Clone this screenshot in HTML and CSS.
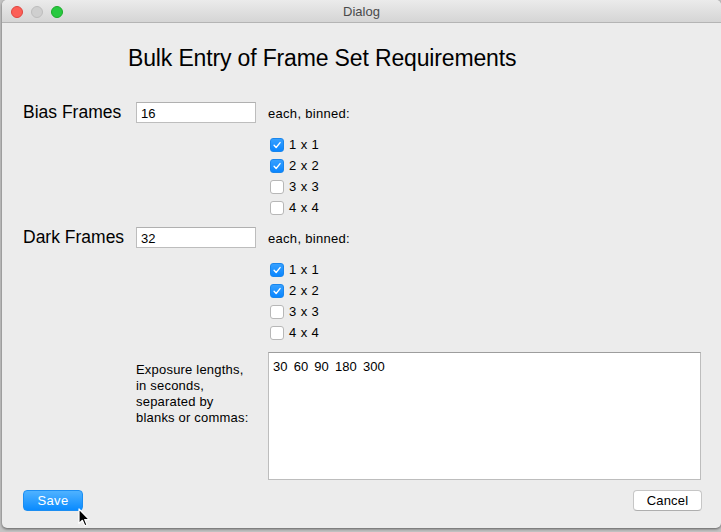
FILE: index.html
```html
<!DOCTYPE html>
<html>
<head>
<meta charset="utf-8">
<link rel="stylesheet" href="styles.css">
</head>
<body>
<div class="window">
  <div class="titlebar">
    <div class="lights">
      <span class="light red"></span>
      <span class="light gray"></span>
      <span class="light green"></span>
    </div>
    <div class="wintitle">Dialog</div>
  </div>
  <div class="content">
    <h1 class="heading">Bulk Entry of Frame Set Requirements</h1>

    <div class="frames">
      <div class="frame-label">Bias Frames</div>
      <input class="count" type="text" value="16">
      <div class="each">each, binned:</div>
      <div class="checks">
        <div class="check"><span class="box on"><svg viewBox="0 0 14 14"><path d="M3.6 7.4 L6 9.9 L10.6 4.2"/></svg></span>1 x 1</div>
        <div class="check"><span class="box on"><svg viewBox="0 0 14 14"><path d="M3.6 7.4 L6 9.9 L10.6 4.2"/></svg></span>2 x 2</div>
        <div class="check"><span class="box"></span>3 x 3</div>
        <div class="check"><span class="box"></span>4 x 4</div>
      </div>
    </div>

    <div class="frames">
      <div class="frame-label">Dark Frames</div>
      <input class="count" type="text" value="32">
      <div class="each">each, binned:</div>
      <div class="checks">
        <div class="check"><span class="box on"><svg viewBox="0 0 14 14"><path d="M3.6 7.4 L6 9.9 L10.6 4.2"/></svg></span>1 x 1</div>
        <div class="check"><span class="box on"><svg viewBox="0 0 14 14"><path d="M3.6 7.4 L6 9.9 L10.6 4.2"/></svg></span>2 x 2</div>
        <div class="check"><span class="box"></span>3 x 3</div>
        <div class="check"><span class="box"></span>4 x 4</div>
      </div>
    </div>

    <div class="exposure">
      <div class="exp-label">Exposure lengths,<br>in seconds,<br>separated by<br>blanks or commas:</div>
      <textarea class="exp-text">30 60 90 180 300</textarea>
    </div>

    <div class="buttons">
      <button class="btn save">Save</button>
      <button class="btn cancel">Cancel</button>
    </div>
  </div>
</div>
<svg class="cursor" width="14" height="20" viewBox="0 0 14 20"><path d="M1 1 L1 15.5 L4.4 12.3 L6.8 17.8 L9 16.9 L6.7 11.6 L11.2 11.6 Z" fill="#000" stroke="#fff" stroke-width="1.2" stroke-linejoin="round"/></svg>
</body>
</html>
```

FILE: styles.css
```css
html, body {
  margin: 0;
  padding: 0;
}
body {
  width: 721px;
  height: 532px;
  overflow: hidden;
  background: #c4c4c4;
  font-family: "Liberation Sans", Arial, Helvetica, sans-serif;
  color: #000;
  position: relative;
}
.window {
  margin-left: 2px;
  width: 719px;
  height: 528px;
  background: #ececec;
  border-radius: 5px;
  box-shadow: 0 1px 3px rgba(0,0,0,0.55);
  overflow: hidden;
}
.titlebar {
  height: 22px;
  border-bottom: 1px solid #b4b4b4;
  background: linear-gradient(#ebebeb, #d5d5d5);
  position: relative;
  display: flex;
  align-items: center;
}
.lights {
  display: flex;
  gap: 8px;
  padding-left: 9px;
  padding-top: 2px;
}
.light {
  width: 12px;
  height: 12px;
  border-radius: 50%;
  box-sizing: border-box;
}
.red { background: #fc5f57; border: 0.5px solid #e0443e; }
.gray { background: #cfcfcf; border: 0.5px solid #bdbdbd; }
.green { background: #28c940; border: 0.5px solid #1aab29; }
.wintitle {
  position: absolute;
  left: 0;
  right: 0;
  top: 0;
  line-height: 24px;
  text-align: center;
  font-size: 13px;
  color: #4a4a4a;
}
.content {
  padding-left: 21px;
  padding-right: 20px;
}
.heading {
  margin: 20px 0 29px 105px;
  font-size: 23px;
  line-height: 30px;
  font-weight: normal;
  letter-spacing: -0.15px;
  color: #000;
}
.frames {
  display: grid;
  grid-template-columns: 113px 132px 1fr;
  grid-template-rows: 21px auto;
  row-gap: 11px;
  margin-bottom: 9px;
}
.frame-label {
  font-size: 17.5px;
  line-height: 21px;
  color: #000;
}
.count {
  box-sizing: border-box;
  width: 120px;
  height: 21px;
  margin: 0;
  padding: 1px 4px 0;
  border: 1px solid #bdbdbd;
  border-top-color: #b0b0b0;
  background: #fff;
  font-family: "Liberation Sans", Arial, sans-serif;
  font-size: 13px;
  color: #000;
  outline: none;
}
.each {
  font-size: 13px;
  line-height: 21px;
  padding-top: 1px;
  letter-spacing: 0.3px;
  color: #000;
}
.checks {
  grid-column: 3;
  grid-row: 2;
  padding-left: 2px;
}
.check {
  display: flex;
  align-items: center;
  height: 21px;
  gap: 5px;
  font-size: 13px;
  letter-spacing: 0.4px;
  color: #000;
}
.box {
  width: 14px;
  height: 14px;
  box-sizing: border-box;
  border-radius: 3px;
  background: #fff;
  border: 1px solid #b7b7b7;
  display: block;
  flex: none;
}
.box.on {
  background: linear-gradient(#36a0ff, #0a86ff);
  border: 1px solid #1a86ec;
}
.box svg {
  display: block;
  width: 12px;
  height: 12px;
}
.box svg path {
  fill: none;
  stroke: #fff;
  stroke-width: 1.6;
  stroke-linecap: round;
  stroke-linejoin: round;
}
.exposure {
  display: grid;
  grid-template-columns: 113px 132px 433px;
}
.exp-label {
  grid-column: 2;
  font-size: 13px;
  line-height: 16px;
  padding-top: 10px;
  letter-spacing: 0.2px;
  color: #000;
}
.exp-text {
  grid-column: 3;
  box-sizing: border-box;
  width: 433px;
  height: 128px;
  margin: 0;
  padding: 6px 4px 4px;
  border: 1px solid #bdbdbd;
  border-top-color: #9d9d9d;
  background: #fff;
  resize: none;
  font-family: "Liberation Sans", Arial, sans-serif;
  font-size: 13px;
  line-height: 16px;
  word-spacing: 2.6px;
  color: #000;
  outline: none;
  overflow: hidden;
}
.buttons {
  display: flex;
  justify-content: space-between;
  margin-top: 10px;
}
.btn {
  box-sizing: border-box;
  height: 21px;
  margin: 0;
  padding: 0;
  border-radius: 4px;
  font-family: "Liberation Sans", Arial, sans-serif;
  font-size: 13px;
  line-height: 19px;
}
.save {
  width: 60px;
  background: linear-gradient(#4fb2ff, #0a8bff);
  border: 1px solid #1c8ef2;
  color: #fff;
  letter-spacing: 0.3px;
}
.cancel {
  width: 69px;
  margin-right: -1px;
  background: #fff;
  border: 1px solid #c6c6c6;
  border-bottom-color: #aeaeae;
  color: #000;
  letter-spacing: 0.2px;
}
.cursor {
  position: absolute;
  left: 78px;
  top: 508px;
}
```
